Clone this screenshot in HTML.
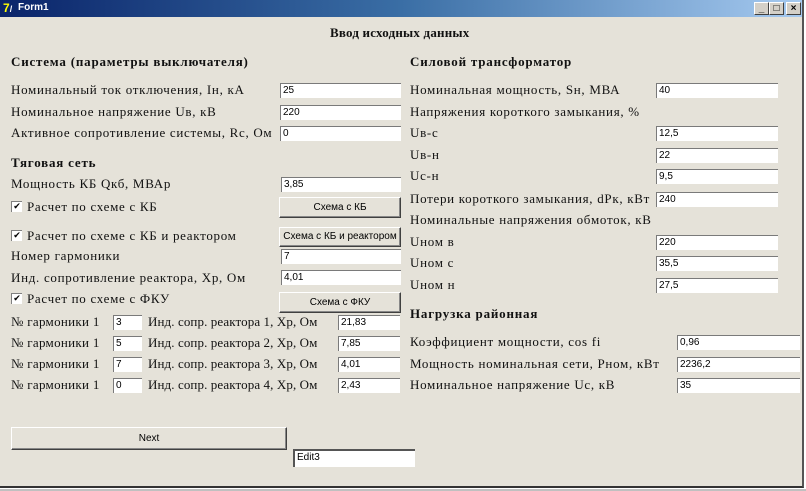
<!DOCTYPE html>
<html><head><meta charset="utf-8"><style>
*{margin:0;padding:0;box-sizing:border-box}
body{width:806px;height:491px;overflow:hidden;background:#fff;position:relative;font-family:"Liberation Serif","DejaVu Serif",serif}
#win{position:absolute;left:0;top:0;width:804px;height:488px;background:#e5e2d9;border-right:2px solid #555;border-bottom:2px solid #333}
#title{position:absolute;left:0;top:0;width:802px;height:17px;background:linear-gradient(90deg,#0a246a 0%,#3a6ea5 50%,#a6caf0 100%)}
#title span{position:absolute;left:18px;top:2px;color:#fff;font:bold 10px "Liberation Sans",sans-serif}
.ico{position:absolute;left:3px;top:2px;width:13px;height:13px;color:#ff0;font:bold 12px "Liberation Sans",sans-serif;line-height:13px}
.tb{position:absolute;top:2px;width:15px;height:13px;background:#d4d0c8;border:1px solid;border-color:#fff #404040 #404040 #fff;font:bold 10px "Liberation Sans",sans-serif;text-align:center;line-height:11px;color:#000}
.t{position:absolute;font-size:13px;line-height:14px;white-space:nowrap;color:#111;letter-spacing:.7px}
.b{font-weight:bold;letter-spacing:.8px}
.in{position:absolute;height:15px;background:#fff;border-top:1px solid #7a7a7a;border-left:1px solid #7a7a7a;font:10px "Liberation Sans",sans-serif;line-height:13px;padding-left:2px;color:#000}
.btn{position:absolute;background:#e5e2d9;border:1px solid;border-color:#fff #404040 #404040 #fff;box-shadow:inset -1px -1px #888;font:10px "Liberation Sans",sans-serif;text-align:center;color:#000}
.cb{position:absolute;width:11px;height:11px;background:#fff;border-top:1px solid #808080;border-left:1px solid #808080;font:bold 9px "DejaVu Sans",sans-serif;line-height:10px;text-align:center;color:#000}
#bot{position:absolute;left:0;top:489px;width:806px;height:2px;background:#c0c0c0}
</style></head><body>
<div id="win">
<div id="title"><div class="ico">7<span style="position:static;color:#fff;font-size:9px">/</span></div><span>Form1</span>
<div class="tb" style="left:754px">_</div><div class="tb" style="left:769px">□</div><div class="tb" style="left:786px">×</div></div>

<div class="t b" style="left:330px;top:26px;letter-spacing:.2px">Ввод исходных данных</div>
<div class="t b" style="left:11px;top:55px">Система (параметры выключателя)</div>
<div class="t" style="left:11px;top:83px">Номинальный ток отключения, Iн, кА</div>
<div class="t" style="left:11px;top:105px">Номинальное напряжение Uв, кВ</div>
<div class="t" style="left:11px;top:126px">Активное сопротивление системы, Rc, Ом</div>
<div class="in" style="left:280px;top:83px;width:121px">25</div>
<div class="in" style="left:280px;top:105px;width:121px">220</div>
<div class="in" style="left:280px;top:126px;width:121px">0</div>

<div class="t b" style="left:11px;top:156px">Тяговая сеть</div>
<div class="t" style="left:11px;top:177px">Мощность КБ Qкб, МВАр</div>
<div class="in" style="left:281px;top:177px;width:120px">3,85</div>
<div class="cb" style="left:11px;top:201px">✔</div><div class="t" style="left:27px;top:200px">Расчет по схеме с КБ</div>
<div class="btn" style="left:279px;top:197px;width:122px;height:21px;line-height:19px">Схема с КБ</div>
<div class="cb" style="left:11px;top:230px">✔</div><div class="t" style="left:27px;top:229px">Расчет по схеме с КБ и реактором</div>
<div class="btn" style="left:279px;top:227px;width:122px;height:20px;line-height:18px">Схема с КБ и реактором</div>
<div class="t" style="left:11px;top:249px">Номер гармоники</div>
<div class="in" style="left:281px;top:249px;width:120px">7</div>
<div class="t" style="left:11px;top:271px">Инд. сопротивление реактора, Xp, Ом</div>
<div class="in" style="left:281px;top:270px;width:120px">4,01</div>
<div class="cb" style="left:11px;top:293px">✔</div><div class="t" style="left:27px;top:292px">Расчет по схеме с ФКУ</div>
<div class="btn" style="left:279px;top:292px;width:122px;height:21px;line-height:19px">Схема с ФКУ</div>

<div class="t" style="left:11px;top:315px;letter-spacing:.3px">№ гармоники 1</div><div class="in" style="left:113px;top:315px;width:29px">3</div>
<div class="t" style="left:148px;top:315px;letter-spacing:.1px">Инд. сопр. реактора 1, Xp, Ом</div><div class="in" style="left:338px;top:315px;width:62px">21,83</div>
<div class="t" style="left:11px;top:336px;letter-spacing:.3px">№ гармоники 1</div><div class="in" style="left:113px;top:336px;width:29px">5</div>
<div class="t" style="left:148px;top:336px;letter-spacing:.1px">Инд. сопр. реактора 2, Xp, Ом</div><div class="in" style="left:338px;top:336px;width:62px">7,85</div>
<div class="t" style="left:11px;top:357px;letter-spacing:.3px">№ гармоники 1</div><div class="in" style="left:113px;top:357px;width:29px">7</div>
<div class="t" style="left:148px;top:357px;letter-spacing:.1px">Инд. сопр. реактора 3, Xp, Ом</div><div class="in" style="left:338px;top:357px;width:62px">4,01</div>
<div class="t" style="left:11px;top:378px;letter-spacing:.3px">№ гармоники 1</div><div class="in" style="left:113px;top:378px;width:29px">0</div>
<div class="t" style="left:148px;top:378px;letter-spacing:.1px">Инд. сопр. реактора 4, Xp, Ом</div><div class="in" style="left:338px;top:378px;width:62px">2,43</div>

<div class="t b" style="left:410px;top:55px">Силовой трансформатор</div>
<div class="t" style="left:410px;top:83px">Номинальная мощность, Sн, МВА</div><div class="in" style="left:656px;top:83px;width:122px">40</div>
<div class="t" style="left:410px;top:105px">Напряжения короткого замыкания, %</div>
<div class="t" style="left:410px;top:126px">Uв-с</div><div class="in" style="left:656px;top:126px;width:122px">12,5</div>
<div class="t" style="left:410px;top:148px">Uв-н</div><div class="in" style="left:656px;top:148px;width:122px">22</div>
<div class="t" style="left:410px;top:169px">Uс-н</div><div class="in" style="left:656px;top:169px;width:122px">9,5</div>
<div class="t" style="left:410px;top:192px">Потери короткого замыкания, dPк, кВт</div><div class="in" style="left:656px;top:192px;width:122px">240</div>
<div class="t" style="left:410px;top:213px">Номинальные напряжения обмоток, кВ</div>
<div class="t" style="left:410px;top:235px">Uном в</div><div class="in" style="left:656px;top:235px;width:122px">220</div>
<div class="t" style="left:410px;top:256px">Uном с</div><div class="in" style="left:656px;top:256px;width:122px">35,5</div>
<div class="t" style="left:410px;top:278px">Uном н</div><div class="in" style="left:656px;top:278px;width:122px">27,5</div>
<div class="t b" style="left:410px;top:307px">Нагрузка районная</div>
<div class="t" style="left:410px;top:335px">Коэффициент мощности, cos fi</div><div class="in" style="left:677px;top:335px;width:123px">0,96</div>
<div class="t" style="left:410px;top:357px">Мощность номинальная сети, Pном, кВт</div><div class="in" style="left:677px;top:357px;width:123px">2236,2</div>
<div class="t" style="left:410px;top:378px">Номинальное напряжение Uс, кВ</div><div class="in" style="left:677px;top:378px;width:123px">35</div>

<div class="btn" style="left:11px;top:427px;width:276px;height:23px;line-height:21px">Next</div>
<div class="in" style="left:293px;top:449px;width:122px;height:18px;border-top:2px solid #555;border-left:2px solid #555;line-height:14px">Edit3</div>
</div>
<div id="bot"></div>
</body></html>
